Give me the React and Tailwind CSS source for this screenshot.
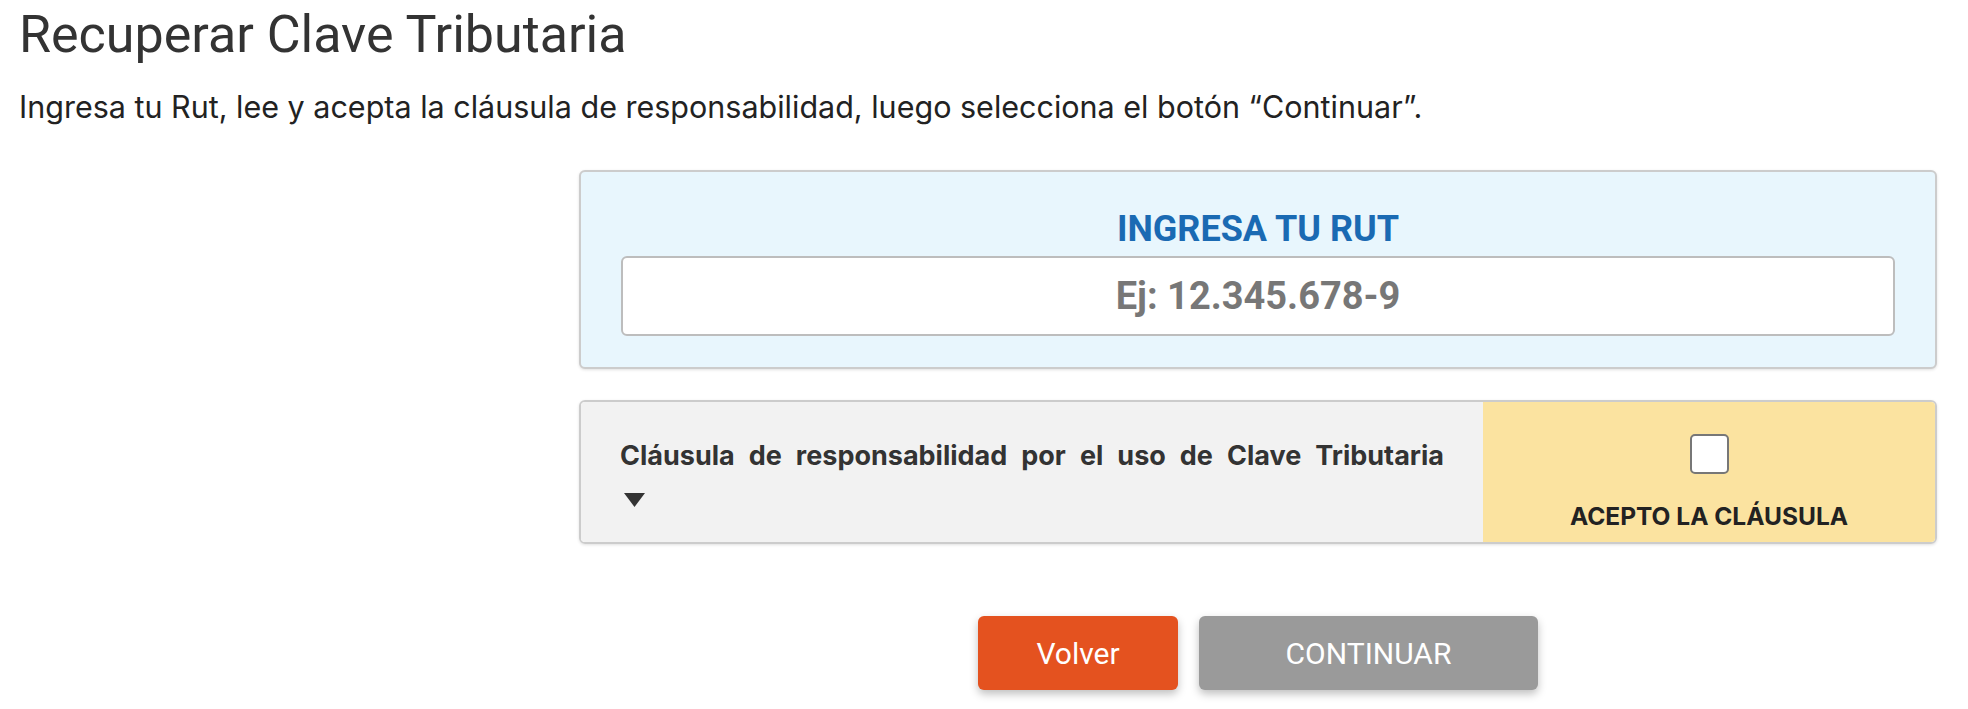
export default function App() {
  return (
    <div className="min-h-screen bg-white font-['Roboto',sans-serif] text-[#333]">
      <div className="px-[19px] pt-[4px]">
        <h1 className="text-[52px] leading-[62px] font-normal">Recuperar Clave Tributaria</h1>
        <p className="mt-[22px] font-['Inter',sans-serif] text-[30.5px] leading-[38px] text-[#222]">
          Ingresa tu Rut, lee y acepta la cláusula de responsabilidad, luego selecciona el botón “Continuar”.
        </p>
      </div>

      <div className="ml-[579px] w-[1358px] mt-[44px]">
        {/* RUT */}
        <div className="bg-[#e8f6fd] border-2 border-[#cccccc] rounded-[6px] shadow-[0_1px_3px_rgba(0,0,0,0.12)] px-[40px] pt-[34px] pb-[31px]">
          <div className="text-center text-[#1a6ab3] font-bold text-[36px] leading-[46px]">INGRESA TU RUT</div>
          <input
            type="text"
            placeholder="Ej: 12.345.678-9"
            className="mt-[4px] block w-full h-[80px] bg-white border-2 border-[#bdbdbd] rounded-[6px] text-center text-[38px] font-bold text-[#555] placeholder:text-[#777] focus:outline-none"
          />
        </div>

        {/* Cláusula */}
        <div className="mt-[31px] flex h-[144px] border-2 border-[#cccccc] rounded-[6px] overflow-hidden shadow-[0_1px_3px_rgba(0,0,0,0.12)]">
          <div className="flex-1 bg-[#f2f2f2] px-[39px] pt-[34px]">
            <div className="font-['Inter',sans-serif] text-[27px] leading-[40px] font-bold text-[#333] text-justify [text-align-last:justify]">
              Cláusula de responsabilidad por el uso de Clave Tributaria
            </div>
            <svg className="mt-[17px] ml-[4px]" width="21" height="14" viewBox="0 0 21 14">
              <polygon points="0,0 21,0 10.5,14" fill="#333" />
            </svg>
          </div>
          <div className="w-[452px] bg-[#fbe3a0] flex flex-col items-center pt-[32px]">
            <input
              type="checkbox"
              className="appearance-none w-[39px] h-[40px] bg-white border-2 border-[#777] rounded-[5px]"
            />
            <div className="mt-[26px] font-['Inter',sans-serif] text-[24.5px] leading-[32px] font-bold text-[#222]">ACEPTO LA CLÁUSULA</div>
          </div>
        </div>

        {/* Botones */}
        <div className="mt-[72px] flex justify-center gap-[21px]">
          <button className="w-[200px] h-[74px] bg-[#e4521f] text-white text-[30px] rounded-[6px] shadow-[0_4px_8px_rgba(0,0,0,0.25)]">
            Volver
          </button>
          <button className="w-[339px] h-[74px] bg-[#9a9a9a] text-white text-[30px] rounded-[6px] shadow-[0_4px_8px_rgba(0,0,0,0.25)]">
            CONTINUAR
          </button>
        </div>
      </div>
    </div>
  );
}
